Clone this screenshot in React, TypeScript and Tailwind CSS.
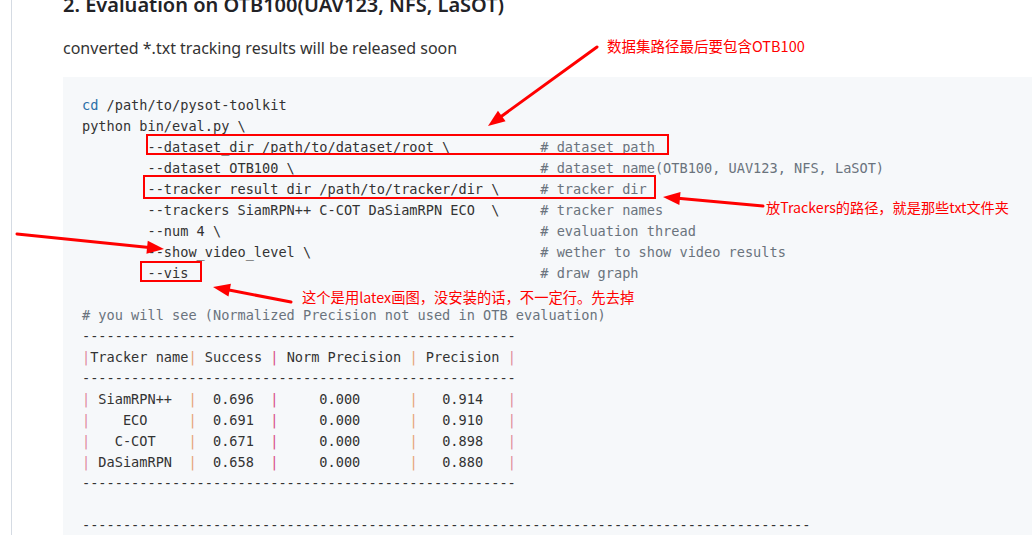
import React from "react";

const mono = { fontFamily: '"DejaVu Sans Mono", "Liberation Mono", monospace' };
const cjk = { fontFamily: '"Noto Sans CJK SC", sans-serif' };
const sans = { fontFamily: '"Noto Sans", "Open Sans", sans-serif' };

function pad(s: string, n: number) {
  return s.length >= n ? s : s + " ".repeat(n - s.length);
}

type Seg = { t: string; c?: string };

const CMT = "#6a737d";
const P0 = "#e08a9a";
const P1 = "#e6a273";
const P2 = "#d84a82";

function cmdLine(cmd: string, comment: string): Seg[] {
  return [
    { t: pad("        " + cmd, 56) },
    { t: comment, c: CMT },
  ];
}

function row(cells: string[]): Seg[] {
  const colors = [P0, P1, P2, P1, P0];
  const segs: Seg[] = [];
  segs.push({ t: "|", c: colors[0] });
  cells.forEach((cell, i) => {
    segs.push({ t: cell });
    segs.push({ t: "|", c: colors[i + 1] });
  });
  return segs;
}

const lines: Seg[][] = [
  [{ t: "cd", c: "#2a6fa8" }, { t: " /path/to/pysot-toolkit" }],
  [{ t: "python bin/eval.py \\" }],
  cmdLine("--dataset_dir /path/to/dataset/root \\", "# dataset path"),
  cmdLine("--dataset OTB100 \\", "# dataset name(OTB100, UAV123, NFS, LaSOT)"),
  cmdLine("--tracker_result_dir /path/to/tracker/dir \\", "# tracker dir"),
  cmdLine("--trackers SiamRPN++ C-COT DaSiamRPN ECO  \\", "# tracker names"),
  cmdLine("--num 4 \\", "# evaluation thread"),
  cmdLine("--show_video_level \\", "# wether to show video results"),
  cmdLine("--vis", "# draw graph"),
  [{ t: " " }],
  [{ t: "# you will see (Normalized Precision not used in OTB evaluation)", c: CMT }],
  [{ t: "-".repeat(53) }],
  row(["Tracker name", " Success ", " Norm Precision ", " Precision "]),
  [{ t: "-".repeat(53) }],
  row([" SiamRPN++  ", "  0.696  ", "     0.000      ", "   0.914   "]),
  row(["    ECO     ", "  0.691  ", "     0.000      ", "   0.910   "]),
  row(["   C-COT    ", "  0.671  ", "     0.000      ", "   0.898   "]),
  row([" DaSiamRPN  ", "  0.658  ", "     0.000      ", "   0.880   "]),
  [{ t: "-".repeat(53) }],
  [{ t: " " }],
  [{ t: "-".repeat(89) }],
];

function Arrow({ x1, y1, x2, y2 }: { x1: number; y1: number; x2: number; y2: number }) {
  const dx = x2 - x1;
  const dy = y2 - y1;
  const len = Math.sqrt(dx * dx + dy * dy);
  const ux = dx / len;
  const uy = dy / len;
  const L = 17;
  const W = 6.5;
  const bx = x2 - ux * L;
  const by = y2 - uy * L;
  const px = -uy;
  const py = ux;
  const pts = `${x2},${y2} ${bx + px * W},${by + py * W} ${bx - px * W},${by - py * W}`;
  return (
    <g>
      <line x1={x1} y1={y1} x2={bx + ux * 2} y2={by + uy * 2} stroke="#ff0000" strokeWidth={3} strokeLinecap="round" />
      <polygon points={pts} fill="#ff0000" />
    </g>
  );
}

export default function App() {
  return (
    <div className="relative w-[1032px] h-[535px] overflow-hidden bg-white">
      <div className="ml-[11px] h-full flex flex-col border-l border-[#d5dbe3] pl-[51px]">
        <h2
          className="mt-[-10px] h-[30px] shrink-0 text-[20px] leading-[30px] font-semibold text-[#222226] whitespace-nowrap"
          style={sans}
        >
          2. Evaluation on OTB100(UAV123, NFS, LaSOT)
        </h2>
        <p className="mt-[16px] text-[16px] leading-[24px] text-[#333333] whitespace-nowrap" style={sans}>
          converted *.txt tracking results will be released soon
        </p>
        <div className="mt-[17px] flex-1 bg-[#f6f8fa] pl-[19px] pt-[18px]">
          <div className="text-[13.6px] leading-[21px] text-[#333333]" style={mono}>
            {lines.map((segs, i) => (
              <div key={i} className="h-[21px] whitespace-pre">
                {segs.map((s, j) => (
                  <span key={j} style={s.c ? { color: s.c } : undefined}>
                    {s.t}
                  </span>
                ))}
              </div>
            ))}
          </div>
        </div>
      </div>

      {/* red annotation boxes */}
      <div className="absolute left-[146px] top-[134px] w-[523px] h-[21px] border-2 border-[#ff0000]" />
      <div className="absolute left-[143px] top-[175px] w-[513px] h-[24px] border-2 border-[#ff0000]" />
      <div className="absolute left-[140px] top-[261px] w-[62px] h-[21px] border-2 border-[#ff0000]" />

      {/* red annotation texts */}
      <div className="absolute left-[607px] top-[36px] text-[14.5px] leading-[20px] text-[#ff0000] whitespace-nowrap" style={cjk}>
        数据集路径最后要包含OTB100
      </div>
      <div className="absolute left-[766px] top-[197px] text-[14.2px] leading-[20px] text-[#ff0000] whitespace-nowrap" style={cjk}>
        放Trackers的路径，就是那些txt文件夹
      </div>
      <div className="absolute left-[302px] top-[287px] text-[14.3px] leading-[20px] text-[#ff0000] whitespace-nowrap" style={cjk}>
        这个是用latex画图，没安装的话，不一定行。先去掉
      </div>

      <svg className="absolute left-0 top-0 pointer-events-none" width={1032} height={535}>
        <Arrow x1={597} y1={47} x2={488} y2={126} />
        <Arrow x1={763} y1={206} x2={663} y2={197} />
        <Arrow x1={17} y1={234} x2={164} y2={249} />
        <Arrow x1={291} y1={302} x2={213} y2={287} />
      </svg>
    </div>
  );
}
